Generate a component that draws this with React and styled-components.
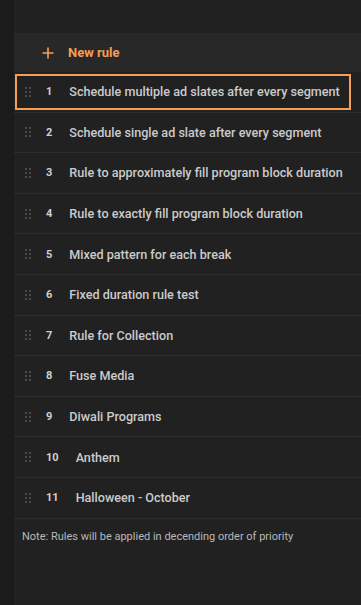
import React from 'react'
import styled, { createGlobalStyle } from 'styled-components'

const rules = [
  'Schedule multiple ad slates after every segment',
  'Schedule single ad slate after every segment',
  'Rule to approximately fill program block duration',
  'Rule to exactly fill program block duration',
  'Mixed pattern for each break',
  'Fixed duration rule test',
  'Rule for Collection',
  'Fuse Media',
  'Diwali Programs',
  'Anthem',
  'Halloween - October',
]

const GlobalStyle = createGlobalStyle`
  html, body {
    margin: 0;
    padding: 0;
    background: #1a1a1a;
    font-family: Roboto, "Liberation Sans", Arial, sans-serif;
  }
`

const Page = styled.div`
  display: flex;
  height: 605px;
  overflow: hidden;
`

const Strip = styled.div`
  width: 14px;
  flex-shrink: 0;
  background: #1b1b1b;
`

const Panel = styled.div`
  flex: 1;
  background: #212121;
  padding-top: 33px;
  display: flex;
  flex-direction: column;
`

const Header = styled.div`
  height: 39px;
  background: #282828;
  display: flex;
  align-items: center;
  padding-left: 28px;
  gap: 14px;
  color: #f79d54;
  font-size: 13px;
  font-weight: 700;
`

const List = styled.div`
  display: flex;
  flex-direction: column;
`

const Row = styled.div`
  height: 40.6px;
  box-sizing: border-box;
  border-bottom: 1px solid #2d2d2d;
  padding: ${p => (p.$active ? '2px 10px 2px 1px' : '0')};
`

const RowInner = styled.div`
  height: 100%;
  box-sizing: border-box;
  display: flex;
  align-items: center;
  padding-left: ${p => (p.$active ? '8px' : '11px')};
  border: ${p => (p.$active ? '2px solid #f79d54' : 'none')};
`

const Handle = styled.div`
  display: grid;
  grid-template-columns: 2px 2px;
  grid-auto-rows: 2px;
  gap: 2px;
  margin-right: 15px;
  span {
    background: #4a4a4a;
  }
`

const Num = styled.span`
  color: #d0d0d0;
  font-size: 11px;
  font-weight: 700;
  margin-right: 17px;
`

const Title = styled.span`
  color: #cbcbcb;
  font-size: 12.6px;
  font-weight: 500;
  white-space: nowrap;
`

const Note = styled.div`
  padding: 11px 0 0 8px;
  color: #b8b8b8;
  font-size: 11px;
`

const PlusIcon = () => (
  <svg width="12" height="12" viewBox="0 0 12 12" fill="none">
    <path d="M6 0.5v11M0.5 6h11" stroke="#f79d54" strokeWidth="1.6" />
  </svg>
)

export default function App() {
  return (
    <>
      <GlobalStyle />
      <Page>
        <Strip />
        <Panel>
          <Header>
            <PlusIcon />
            New rule
          </Header>
          <List>
            {rules.map((r, i) => (
              <Row key={r} $active={i === 0}>
                <RowInner $active={i === 0}>
                  <Handle>
                    <span /><span /><span /><span /><span /><span />
                  </Handle>
                  <Num>{i + 1}</Num>
                  <Title>{r}</Title>
                </RowInner>
              </Row>
            ))}
          </List>
          <Note>Note: Rules will be applied in decending order of priority</Note>
        </Panel>
      </Page>
    </>
  )
}
